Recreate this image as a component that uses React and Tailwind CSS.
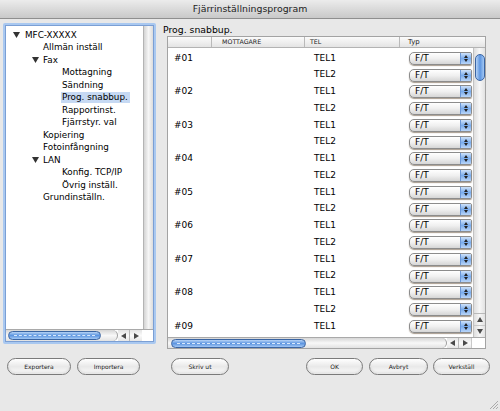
import React from "react";

const tree = [
  { label: "MFC-XXXXX", pad: "pl-[7px]", tri: "mr-[5px]" },
  { label: "Allmän inställ", pad: "pl-[37px]" },
  { label: "Fax", pad: "pl-[26px]", tri: "mr-[4px]" },
  { label: "Mottagning", pad: "pl-[56px]" },
  { label: "Sändning", pad: "pl-[56px]" },
  { label: "Prog. snabbup.", pad: "pl-[56px]", sel: true },
  { label: "Rapportinst.", pad: "pl-[56px]" },
  { label: "Fjärrstyr. val", pad: "pl-[56px]" },
  { label: "Kopiering", pad: "pl-[37px]" },
  { label: "Fotoinfångning", pad: "pl-[37px]" },
  { label: "LAN", pad: "pl-[26px]", tri: "mr-[4px]" },
  { label: "Konfig. TCP/IP", pad: "pl-[56px]" },
  { label: "Övrig inställ.", pad: "pl-[56px]" },
  { label: "Grundinställn.", pad: "pl-[37px]" },
];

const rows = [];
for (let i = 1; i <= 9; i++) {
  rows.push({ num: "#0" + i, tel: "TEL1" });
  rows.push({ num: "", tel: "TEL2" });
}

function Tri({ className }) {
  return (
    <svg width="7" height="6" viewBox="0 0 7 6" className={className}>
      <path d="M0 0H7L3.5 6Z" fill="#333" />
    </svg>
  );
}

function ArrowL() {
  return (
    <svg width="5" height="6" viewBox="0 0 5 6">
      <path d="M5 0V6L0 3Z" fill="#4a4a4a" />
    </svg>
  );
}
function ArrowR() {
  return (
    <svg width="5" height="6" viewBox="0 0 5 6">
      <path d="M0 0V6L5 3Z" fill="#4a4a4a" />
    </svg>
  );
}
function ArrowU() {
  return (
    <svg width="6" height="5" viewBox="0 0 6 5">
      <path d="M0 5H6L3 0Z" fill="#4a4a4a" />
    </svg>
  );
}
function ArrowD() {
  return (
    <svg width="6" height="5" viewBox="0 0 6 5">
      <path d="M0 0H6L3 5Z" fill="#4a4a4a" />
    </svg>
  );
}

function Select() {
  return (
    <div className="flex h-[13px] w-[63px] rounded-l-[5px] rounded-r-[2px] border border-[#8c8c8c] bg-gradient-to-b from-white via-[#f0f0f0] to-[#d6d6d6] shadow-[0_1px_1px_rgba(80,55,30,0.5)] overflow-hidden">
      <div className="flex-1 flex items-center pl-[5px] text-[9px] leading-none text-black">F/T</div>
      <div className="w-[11px] border-l border-[#6b97d6] bg-gradient-to-b from-[#cfe2f9] via-[#7aacec] to-[#b9d5f8] flex flex-col items-center justify-center gap-[1px]">
        <svg width="4" height="3" viewBox="0 0 4 3">
          <path d="M0 3H4L2 0Z" fill="#222" />
        </svg>
        <svg width="4" height="3" viewBox="0 0 4 3">
          <path d="M0 0H4L2 3Z" fill="#222" />
        </svg>
      </div>
    </div>
  );
}

function Button({ label, w }) {
  return (
    <div
      className={
        "h-[17px] rounded-full border border-[#7a7a7a] bg-gradient-to-b from-white via-[#e9e9e9] to-[#fafafa] shadow-[inset_0_-2px_2px_rgba(0,0,0,0.08)] flex items-center justify-center text-[6px] text-[#222] " +
        w
      }
    >
      {label}
    </div>
  );
}

export default function App() {
  return (
    <div className="relative w-[500px] h-[411px] overflow-hidden bg-[#e8e8e8] font-['DejaVu_Sans',sans-serif] text-black">
      {/* Title bar */}
      <div className="h-[19px] bg-gradient-to-b from-[#ececec] to-[#c9c9c9] border-b border-[#8f8f8f] flex items-center justify-center text-[9.4px] text-[#1e1e1e]">
        Fjärrinställningsprogram
      </div>

      <div className="flex pl-[3px] pt-[4px]">
        {/* Left panel */}
        <div className="w-[153px] h-[321px] p-[2px] bg-[#a9c8f0] rounded-[2px]">
          <div className="h-full border border-[#7b9fd4] bg-white flex flex-col">
            <div className="flex flex-1">
              <div className="flex-1 pt-[3px] text-[8.8px] text-black">
                {tree.map((t) => (
                  <div key={t.label} className={"h-[12.5px] flex items-center " + t.pad}>
                    {t.tri && <Tri className={t.tri} />}
                    {t.sel ? (
                      <span className="bg-[#c6d9f3] -ml-[1px] pl-[1px] pr-[2px] leading-[11px]">{t.label}</span>
                    ) : (
                      <span className="leading-[11px]">{t.label}</span>
                    )}
                  </div>
                ))}
              </div>
              <div className="w-[10px] border-l border-[#b4b4b4] bg-gradient-to-r from-[#d4d4d4] via-[#f6f6f6] to-[#dcdcdc]" />
            </div>
            <div className="flex h-[12px] border-t border-[#a9a9a9]">
              <div className="w-[112px] h-full rounded-r-full border-r border-[#9d9d9d] bg-gradient-to-b from-[#d6d6d6] via-[#f8f8f8] to-[#e2e2e2] flex items-center pl-[2px]">
                <div className="w-[93px] h-[9px] rounded-full border border-[#3a64a2] bg-gradient-to-b from-[#b7d3f5] via-[#5d95e0] to-[#a3c8f4] flex items-center px-[5px]">
                  <div className="w-full border-t border-dashed border-[#d9e8fb]" />
                </div>
              </div>
              <div className="w-[12px] flex items-center justify-center bg-gradient-to-b from-[#e4e4e4] via-[#fafafa] to-[#e6e6e6] border-r border-[#b9b9b9]">
                <ArrowL />
              </div>
              <div className="w-[12px] flex items-center justify-center bg-gradient-to-b from-[#e4e4e4] via-[#fafafa] to-[#e6e6e6]">
                <ArrowR />
              </div>
              <div className="flex-1 bg-white" />
            </div>
          </div>
        </div>

        {/* Right column */}
        <div className="ml-[6px] flex flex-col">
          <div className="h-[13px] pl-[1px] flex items-center text-[9.3px] text-black">Prog. snabbup.</div>
          <div className="ml-[5px] w-[319px] h-[313px] border border-[#a3a3a3] bg-white flex flex-col">
            {/* header */}
            <div className="flex h-[11px] border-b border-[#b3b3b3] bg-gradient-to-b from-[#fbfbfb] to-[#e4e4e4] text-[6.3px] text-[#222] leading-none">
              <div className="w-[44px] border-r border-[#b9b9b9]" />
              <div className="w-[93px] border-r border-[#b9b9b9] pl-[10px] flex items-center">MOTTAGARE</div>
              <div className="w-[95px] border-r border-[#b9b9b9] pl-[5px] flex items-center">TEL</div>
              <div className="flex-1 pl-[8px] flex items-center text-[7px]">Typ</div>
            </div>
            {/* body */}
            <div className="flex flex-1 min-h-0">
              <div className="flex-1 overflow-hidden pt-[2px] text-[9px] text-black">
                {rows.map((r, i) => (
                  <div key={i} className="h-[16.75px] flex items-center">
                    <div className="w-[146px] pl-[6px]">{r.num}</div>
                    <div className="w-[95px]">{r.tel}</div>
                    <Select />
                  </div>
                ))}
              </div>
              <div className="w-[12px] flex flex-col bg-gradient-to-r from-[#dedede] via-[#f7f7f7] to-[#e2e2e2] border-l border-[#c2c2c2]">
                <div className="pt-[6px] pl-[1px]">
                  <div className="w-[10px] h-[27px] rounded-full border border-[#3a64a2] bg-gradient-to-r from-[#b7d3f5] via-[#5d95e0] to-[#a3c8f4]" />
                </div>
                <div className="flex-1" />
                <div className="h-[12px] flex items-center justify-center border-t border-[#b9b9b9]">
                  <ArrowU />
                </div>
                <div className="h-[12px] flex items-center justify-center border-t border-[#c9c9c9]">
                  <ArrowD />
                </div>
              </div>
            </div>
            {/* h scroll */}
            <div className="flex h-[11px] border-t border-[#a9a9a9]">
              <div className="w-[279px] h-full rounded-r-full border-r border-[#9d9d9d] bg-gradient-to-b from-[#d6d6d6] via-[#f8f8f8] to-[#e2e2e2] flex items-center pl-[3px]">
                <div className="w-[135px] h-[9px] rounded-full border border-[#3a64a2] bg-gradient-to-b from-[#b7d3f5] via-[#5d95e0] to-[#a3c8f4] flex items-center px-[5px]">
                  <div className="w-full border-t border-dashed border-[#d9e8fb]" />
                </div>
              </div>
              <div className="w-[12px] flex items-center justify-center bg-gradient-to-b from-[#e4e4e4] via-[#fafafa] to-[#e6e6e6] border-r border-[#b9b9b9]">
                <ArrowL />
              </div>
              <div className="w-[12px] flex items-center justify-center bg-gradient-to-b from-[#e4e4e4] via-[#fafafa] to-[#e6e6e6]">
                <ArrowR />
              </div>
              <div className="flex-1 bg-white border-l border-[#c9c9c9]" />
            </div>
          </div>
        </div>
      </div>

      {/* Buttons */}
      <div className="flex items-center pl-[7px] mt-[9px]">
        <Button label="Exportera" w="w-[64px]" />
        <div className="ml-[6px]">
          <Button label="Importera" w="w-[63px]" />
        </div>
        <div className="ml-[31px]">
          <Button label="Skriv ut" w="w-[58px]" />
        </div>
        <div className="ml-[77px]">
          <Button label="OK" w="w-[57px]" />
        </div>
        <div className="ml-[6px]">
          <Button label="Avbryt" w="w-[59px]" />
        </div>
        <div className="ml-[5px]">
          <Button label="Verkställ" w="w-[57px]" />
        </div>
      </div>

      {/* resize grip */}
      <svg className="absolute right-[2px] bottom-[2px]" width="9" height="9" viewBox="0 0 9 9">
        <path d="M1 9L9 1M4 9L9 4M7 9L9 7" stroke="#9a9a9a" strokeWidth="0.8" />
      </svg>
    </div>
  );
}
